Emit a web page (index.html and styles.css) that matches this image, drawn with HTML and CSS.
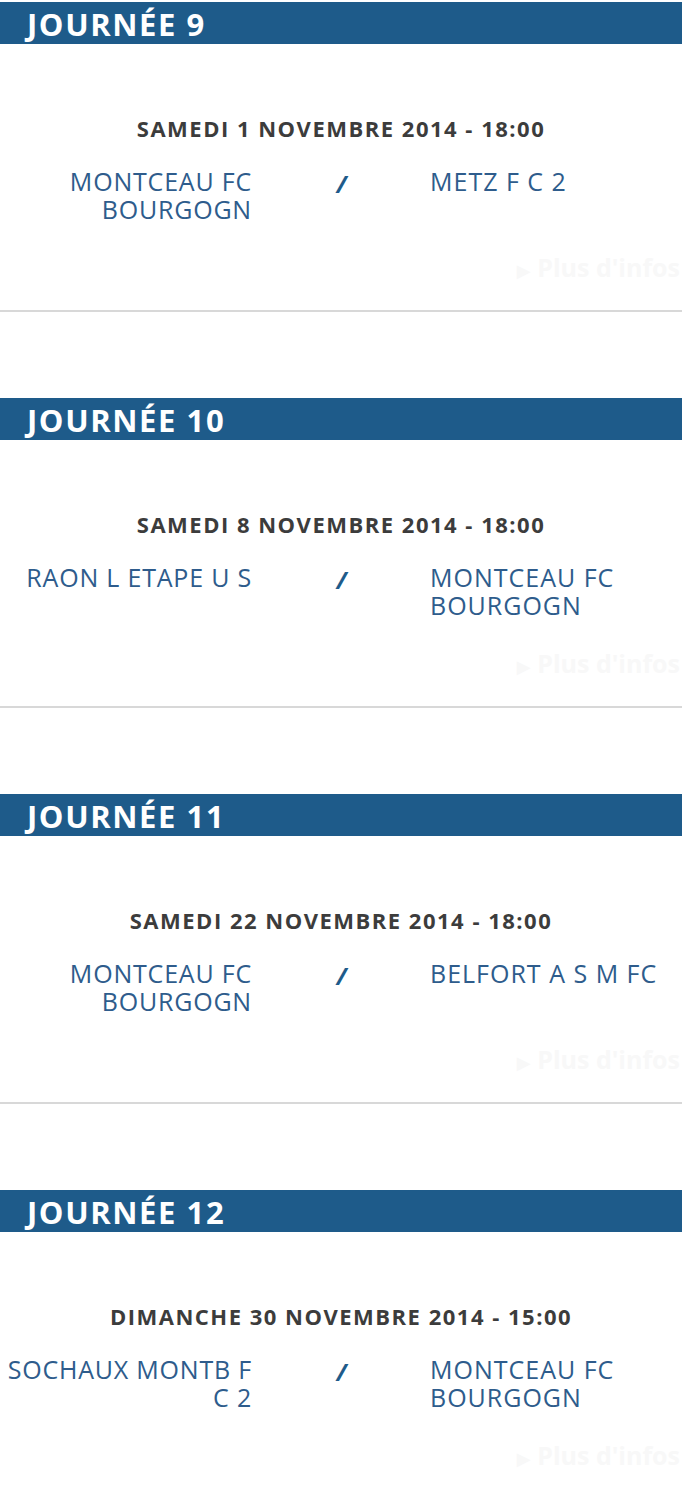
FILE: index.html
```html
<!DOCTYPE html>
<html lang="fr">
<head>
<meta charset="utf-8">
<title>Calendrier</title>
<link rel="stylesheet" href="styles.css">
</head>
<body>
<main class="calendar">
  <section class="round">
    <h2 class="round-title">JOURNÉE 9</h2>
    <div class="match">
      <p class="match-date">SAMEDI 1 NOVEMBRE 2014 - 18:00</p>
      <div class="teams">
        <span class="team home">MONTCEAU FC BOURGOGN</span>
        <span class="sep">/</span>
        <span class="team away">METZ F C 2</span>
      </div>
      <a class="more" href="#"><span class="more-icon">▶</span> Plus d'infos</a>
    </div>
  </section>
  <section class="round">
    <h2 class="round-title">JOURNÉE 10</h2>
    <div class="match">
      <p class="match-date">SAMEDI 8 NOVEMBRE 2014 - 18:00</p>
      <div class="teams">
        <span class="team home">RAON L ETAPE U S</span>
        <span class="sep">/</span>
        <span class="team away">MONTCEAU FC BOURGOGN</span>
      </div>
      <a class="more" href="#"><span class="more-icon">▶</span> Plus d'infos</a>
    </div>
  </section>
  <section class="round">
    <h2 class="round-title">JOURNÉE 11</h2>
    <div class="match">
      <p class="match-date">SAMEDI 22 NOVEMBRE 2014 - 18:00</p>
      <div class="teams">
        <span class="team home">MONTCEAU FC BOURGOGN</span>
        <span class="sep">/</span>
        <span class="team away">BELFORT A S M FC</span>
      </div>
      <a class="more" href="#"><span class="more-icon">▶</span> Plus d'infos</a>
    </div>
  </section>
  <section class="round last">
    <h2 class="round-title">JOURNÉE 12</h2>
    <div class="match">
      <p class="match-date">DIMANCHE 30 NOVEMBRE 2014 - 15:00</p>
      <div class="teams">
        <span class="team home">SOCHAUX MONTB F C 2</span>
        <span class="sep">/</span>
        <span class="team away">MONTCEAU FC BOURGOGN</span>
      </div>
      <a class="more" href="#"><span class="more-icon">▶</span> Plus d'infos</a>
    </div>
  </section>
</main>
</body>
</html>
```
FILE: styles.css
```css
html, body {
  margin: 0;
  padding: 0;
  background: #ffffff;
}

body {
  font-family: "Open Sans", "DejaVu Sans", sans-serif;
}

.calendar {
  width: 682px;
  padding-top: 2px;
}

.round {
  display: flex;
  flex-direction: column;
  margin-bottom: 86px;
}

.round.last {
  margin-bottom: 0;
}

.round-title {
  margin: 0;
  height: 42px;
  background: #1e5b8a;
  color: #ffffff;
  font-size: 31px;
  font-weight: 700;
  line-height: 44px;
  letter-spacing: 1.6px;
  padding-left: 27px;
}

.match {
  display: flex;
  flex-direction: column;
  padding-top: 71px;
  border-bottom: 2px solid #d8d8d8;
}

.match-date {
  margin: 0;
  text-align: center;
  font-size: 22px;
  line-height: 26px;
  font-weight: 700;
  color: #3c3c3c;
  letter-spacing: 1.5px;
}

.teams {
  display: grid;
  grid-template-columns: 251px 1fr 252px;
  margin-top: 26px;
  font-size: 25px;
  line-height: 28px;
  color: #2e5c8c;
  min-height: 56px;
}

.team {
  display: block;
}

.home {
  text-align: right;
  letter-spacing: 0.8px;
  margin-right: -1px;
}

.away {
  text-align: left;
  letter-spacing: 1px;
}

.sep {
  text-align: center;
  font-weight: 700;
  font-style: italic;
  color: #1e5b8a;
  font-size: 24px;
  padding-top: 3px;
  padding-left: 2px;
}

.more {
  align-self: flex-end;
  margin-top: 32px;
  margin-bottom: 28px;
  margin-right: 2px;
  font-size: 25px;
  line-height: 24px;
  font-weight: 700;
  color: #f8f8f8;
  text-decoration: none;
}

.more-icon {
  font-size: 18px;
}
```
